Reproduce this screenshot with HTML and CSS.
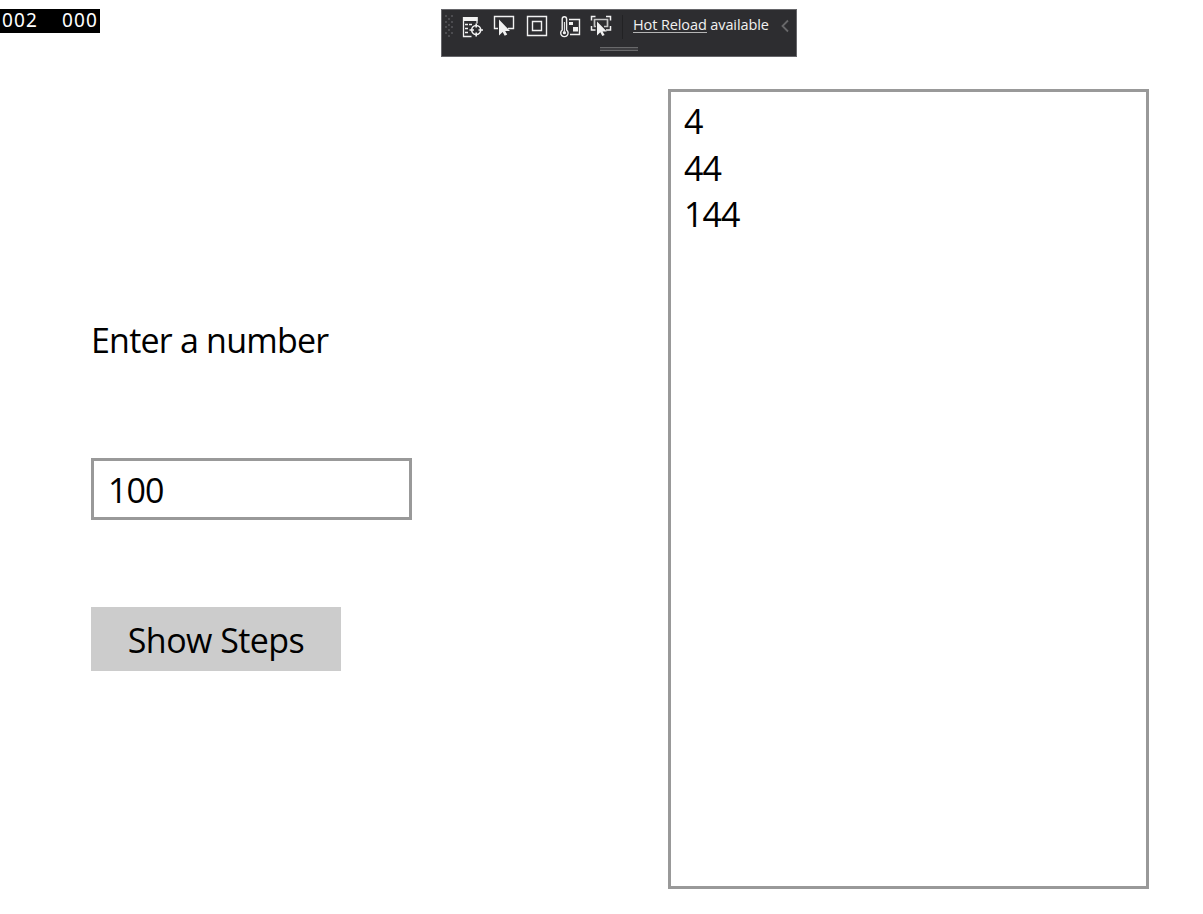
FILE: index.html
```html
<!DOCTYPE html>
<html lang="en">
<head>
<meta charset="utf-8">
<title>Show Steps</title>
<link rel="stylesheet" href="styles.css">
</head>
<body>
<header class="top">
  <div class="counters"><span>002</span><span>000</span></div>
  <div class="toolbar">
    <svg class="icons" width="187" height="46" viewBox="442 10 187 46">
      <g fill="#4c4c50">
        <path d="M445 15h2v2h-2zM451 15h2v2h-2zM448 18h2v2h-2zM445 21h2v2h-2zM451 21h2v2h-2zM448 24h2v2h-2zM445 26h2v2h-2zM451 26h2v2h-2zM448 29h2v2h-2zM445 32h2v2h-2zM451 32h2v2h-2zM448 35h2v2h-2z"/>
      </g>
      <g fill="none" stroke="#f1f1f1">
        <path d="M463.5 17v19.5h8M477 17v6.500M465 24.500h3m1 0h3M465 28.500h3M465 32.500h3" stroke-width="1.300"/>
        <path d="M463 17h14.500v4h-14.500z" fill="#f1f1f1" stroke="none"/>
        <circle cx="476.200" cy="30" r="4.500" stroke-width="1.600"/>
        <path d="M476.200 23.500v4M476.200 32.500v4M469.500 30h4.500M478.500 30h4.500" stroke-width="1.600"/>
        <path d="M498 28.500h-3.500v-12h19v12H508" stroke-width="1.400"/>
        <path d="M499 19.500v16l3.700-3.500 2 3.700 2.500-1.200-2-3.500h4.800z" fill="#f1f1f1" stroke="none"/>
        <path d="M527.500 16.500h19v19h-19zM532.500 21.500h9v9h-9z" stroke-width="1.400"/>
        <path d="M562.200 30V19a2.200 2.200 0 0 1 4.400 0v11a3.700 3.700 0 1 1-4.400 0z" stroke-width="1.400"/>
        <path d="M564.400 22v9" stroke-width="1"/>
        <circle cx="564.400" cy="32.700" r="1.600" fill="#f1f1f1" stroke="none"/>
        <path d="M569 19.500h10.500v15H570" stroke-width="1.400"/>
        <path d="M569 22h4v3h-4zM573 27h5v4.500h-5z" fill="#f1f1f1" stroke="none"/>
        <path d="M591.500 20.500v-4h4M606 16.500h4.500v4M610.500 26v4H606M595.500 30h-4v-4" stroke-width="1.500"/>
        <path d="M596 26.500h-1.500v-7h13v7H604" stroke="#c4c4c4" stroke-width="1.700"/>
        <path d="M597 21.500v14l3.300-3.200 2 3.700 2.300-1-2-3.500h4.200z" fill="#f1f1f1" stroke="none"/>
      </g>
      <path d="M622.500 15v24" stroke="#222224"/>
    </svg>
    <div class="reload"><span class="link">Hot Reload</span> available</div>
    <svg class="chevron" width="10" height="14" viewBox="0 0 10 14"><path d="M8 1.500L2.500 7 8 12.500" fill="none" stroke="#68686a" stroke-width="1.800"/></svg>
    <div class="handle"></div>
  </div>
</header>
<main class="content">
  <section class="form">
    <label class="prompt" for="number">Enter a number</label>
    <input class="number" id="number" type="text" value="100">
    <button class="show" type="button"><span>Show Steps</span></button>
  </section>
  <section class="steps">
    <div>4</div>
    <div>44</div>
    <div>144</div>
  </section>
</main>
</body>
</html>
```
FILE: styles.css
```css
* { box-sizing: border-box; }
body {
  margin: 0;
  height: 914px;
  overflow: hidden;
  background: #fff;
  color: #000;
  font-family: "Open Sans", "Noto Sans", sans-serif;
}
.top {
  display: flex;
  align-items: flex-start;
  height: 89px;
  padding-top: 9px;
}
.counters {
  display: flex;
  justify-content: space-between;
  width: 100px;
  height: 24px;
  padding: 0 2px;
  background: #000;
  color: #fff;
  font-family: "Noto Sans", sans-serif;
  font-size: 19px;
  line-height: 23px;
  letter-spacing: 1.100px;
}
.toolbar {
  position: relative;
  display: flex;
  width: 356px;
  height: 48px;
  margin-left: 341px;
  border: 1px solid #66666a;
  background: #2d2d30;
  color: #f1f1f1;
}
.icons { display: block; flex: none; }
.reload {
  width: 140px;
  margin-left: 4px;
  font-size: 14.500px;
  line-height: 30px;
  letter-spacing: -0.110px;
  white-space: nowrap;
}
.link {
  display: inline-block;
  height: 23px;
  border-bottom: 1px solid #b5b5b5;
  vertical-align: top;
}
.chevron { margin: 9px 0 0 7px; }
.handle {
  position: absolute;
  left: 158px;
  bottom: 5px;
  width: 38px;
  height: 4px;
  border: solid #69696b;
  border-width: 1px 0;
  background: #3e3e41;
}
.content {
  display: grid;
  grid-template-columns: 321px 481px;
  column-gap: 256px;
  padding-left: 91px;
}
.form {
  display: flex;
  flex-direction: column;
  align-items: flex-start;
  padding-top: 227px;
  font-size: 34px;
}
.prompt {
  height: 48px;
  line-height: 48px;
  letter-spacing: -0.790px;
  white-space: nowrap;
}
.number {
  width: 321px;
  height: 62px;
  margin-top: 94px;
  padding: 2px 14px 0;
  border: 3px solid #999;
  border-radius: 0;
  background: #fff;
  color: #000;
  font: 34px "Open Sans", sans-serif;
  letter-spacing: -1px;
  outline: 0;
}
.show {
  width: 250px;
  height: 64px;
  margin-top: 87px;
  padding: 1px 0 0;
  border: 0;
  background: #ccc;
  color: #000;
  font: 34px "Open Sans", sans-serif;
  letter-spacing: -0.550px;
  white-space: nowrap;
}
.steps {
  height: 800px;
  padding: 6px 13px;
  border: 3px solid #999;
  font-size: 34px;
  line-height: 46.500px;
  letter-spacing: -0.900px;
}
```
